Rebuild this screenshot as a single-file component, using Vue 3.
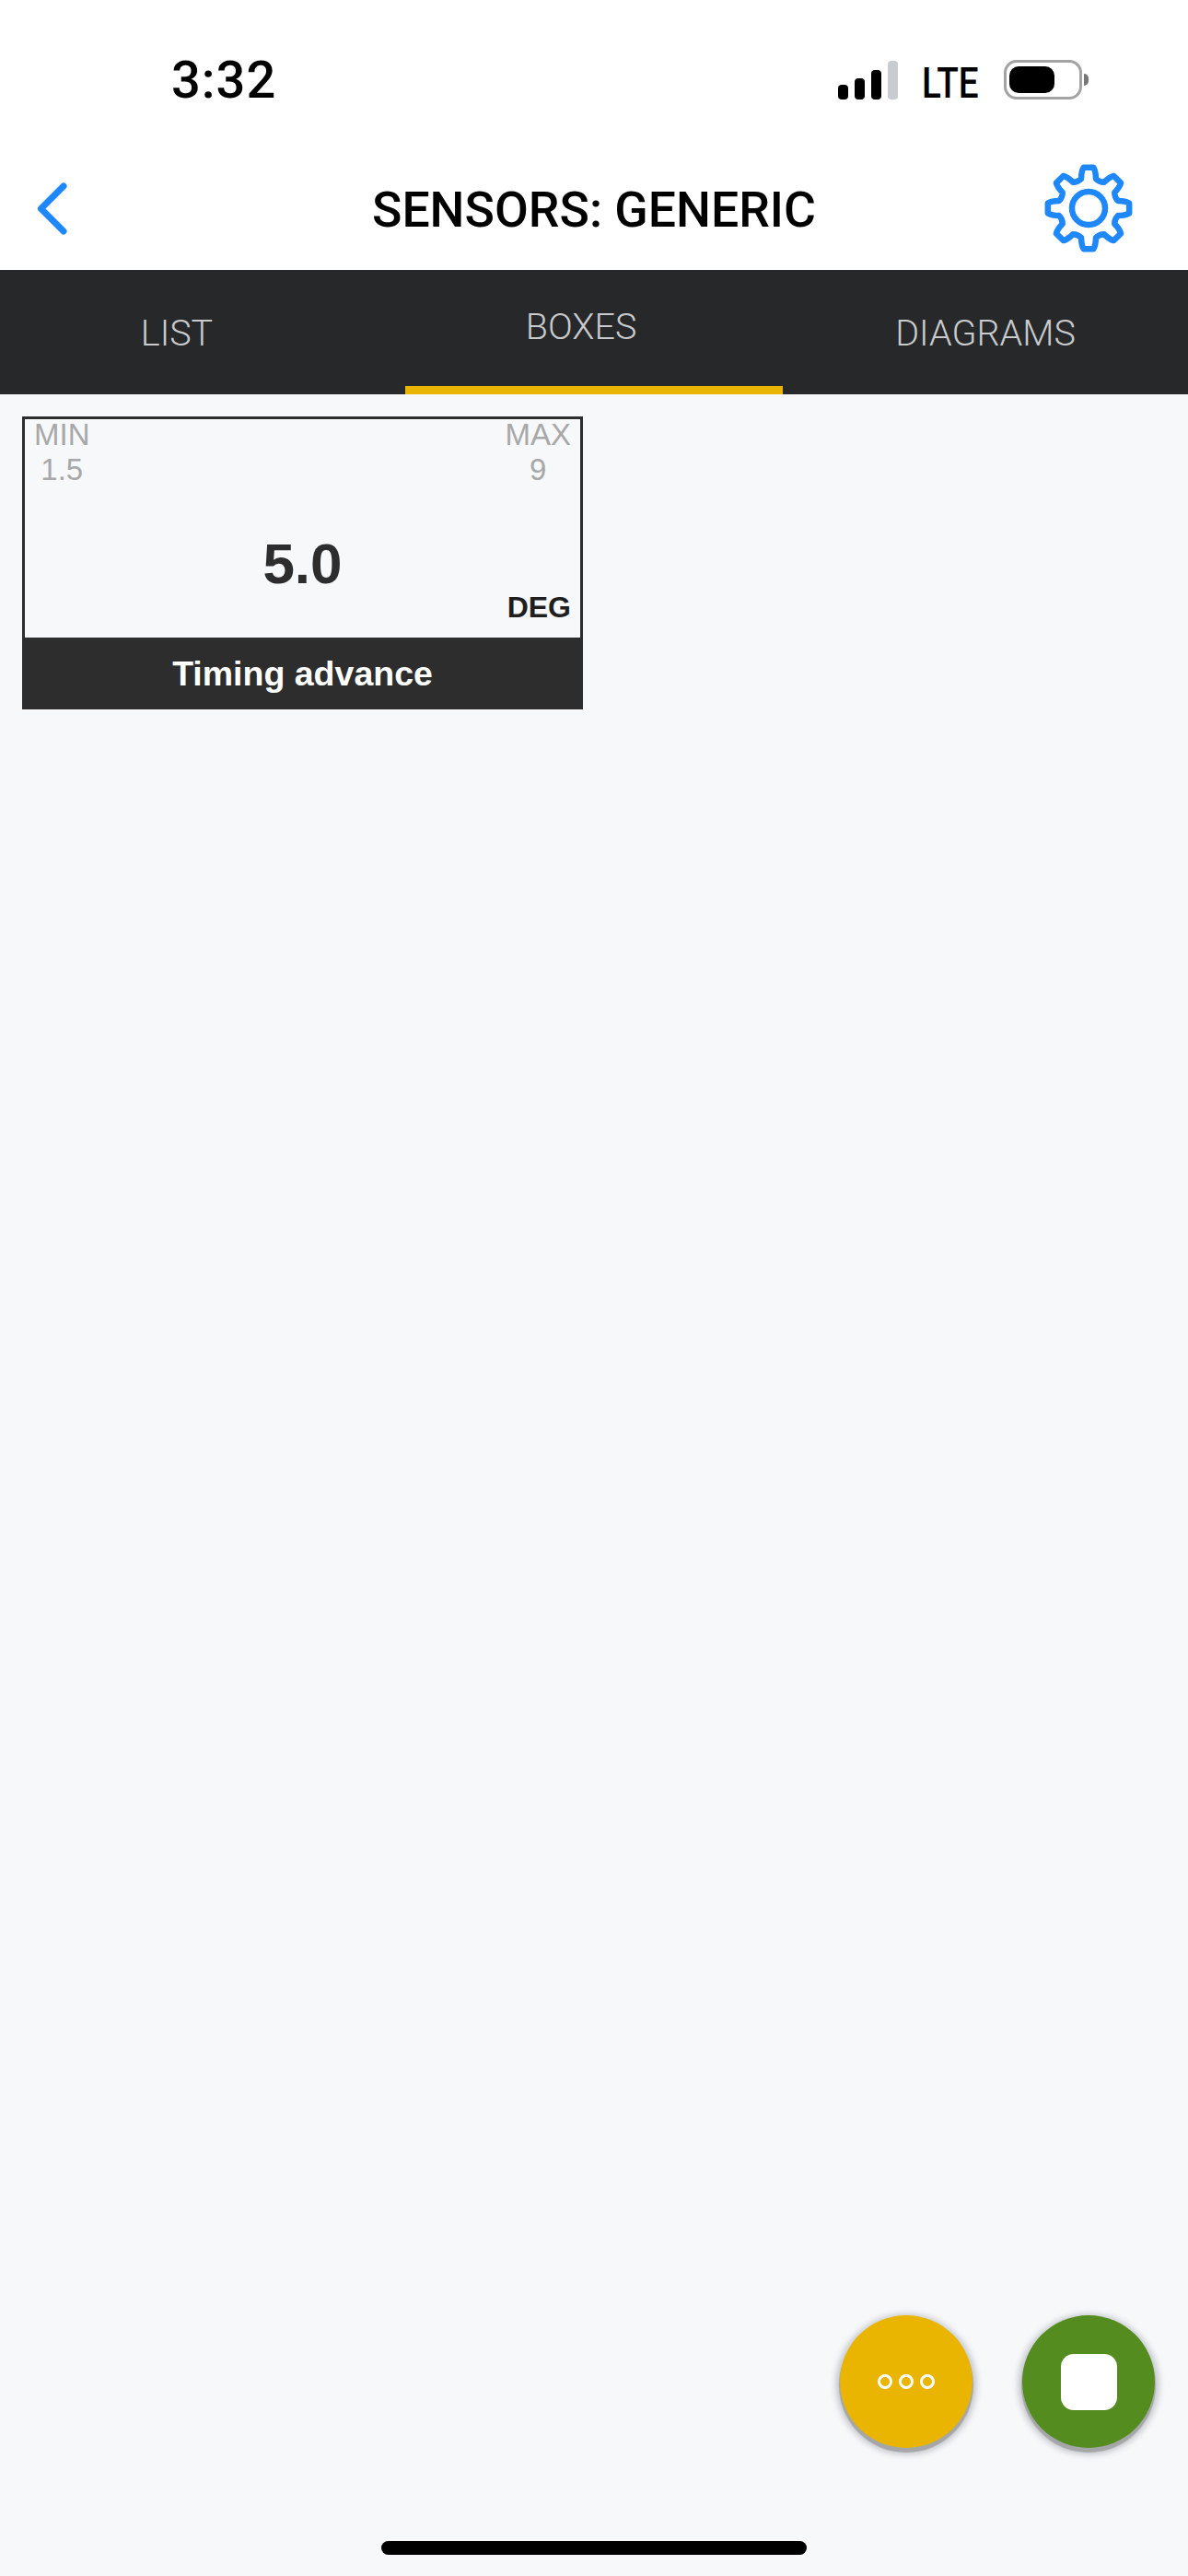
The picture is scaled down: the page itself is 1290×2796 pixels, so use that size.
<template>
  <div class="screen">
    <div class="status">
      <span class="time">3:32</span>
      <div class="signal">
        <i class="b1"></i><i class="b2"></i><i class="b3"></i><i class="b4"></i>
      </div>
      <span class="lte">LTE</span>
      <div class="battery"><div class="charge"></div></div>
      <div class="nub"></div>
    </div>

    <div class="navbar">
      <svg class="back" width="33" height="57" viewBox="0 0 33 57">
        <path d="M29 4 L4.5 28.5 L29 53" fill="none" stroke="#1e88fa" stroke-width="7" stroke-linecap="round" stroke-linejoin="round" />
      </svg>
      <h1>SENSORS: GENERIC</h1>
      <svg class="gear" width="96" height="96" viewBox="0 0 96 96">
        <path :d="gearPath" fill="none" stroke="#1e88fa" stroke-width="6.5" stroke-linejoin="round" />
        <circle cx="48" cy="48" r="18" fill="none" stroke="#1e88fa" stroke-width="6.5" />
      </svg>
    </div>

    <div class="tabs">
      <div class="tab list">LIST</div>
      <div class="tab boxes">BOXES</div>
      <div class="tab">DIAGRAMS</div>
    </div>

    <div class="content">
      <div class="card">
        <div class="card-body">
          <div class="range">
            <div class="minmax"><span>MIN</span><span>1.5</span></div>
            <div class="minmax"><span>MAX</span><span>9</span></div>
          </div>
          <div class="value">5.0</div>
          <div class="unit">DEG</div>
        </div>
        <div class="card-name">Timing advance</div>
      </div>
    </div>

    <div class="actions">
      <button class="fab more"><i></i><i></i><i></i></button>
      <button class="fab stop"><b></b></button>
    </div>

    <div class="home-row"><div class="home"></div></div>
  </div>
</template>

<script setup>
// 8 tooth outline for the settings icon
function pt(r, deg) {
  const a = (deg * Math.PI) / 180
  return (48 + r * Math.sin(a)).toFixed(2) + " " + (48 - r * Math.cos(a)).toFixed(2)
}

let gearPath = ""
for (let i = 0; i < 8; i++) {
  const c = i * 45
  gearPath += (i == 0 ? "M" : "L") + pt(33, c - 14)
  gearPath += " Q" + pt(41, c - 11) + " " + pt(44.5, c - 7)
  gearPath += " L" + pt(44.5, c + 7)
  gearPath += " Q" + pt(41, c + 11) + " " + pt(33, c + 14)
  gearPath += " Q" + pt(30.5, c + 22.5) + " " + pt(33, c + 31)
}
gearPath += " Z"
</script>

<style>
html, body {
  margin: 0;
  background: #f7f8fa;
}
</style>

<style scoped>
* {
  box-sizing: border-box;
}

.screen {
  width: 1290px;
  height: 2796px;
  display: flex;
  flex-direction: column;
  background: #f7f8fa;
  font-family: "Liberation Sans", Arial, sans-serif;
}

.status {
  height: 163px;
  background: #fff;
  display: flex;
  align-items: flex-start;
  padding-top: 65px;
}
.time {
  margin-left: 186px;
  width: 724px;
  font: 500 56px/44px Roboto, sans-serif;
  letter-spacing: 1px;
  color: #000;
}
.signal {
  width: 65px;
  height: 42px;
  margin-top: 1px;
  display: flex;
  align-items: flex-end;
  justify-content: space-between;
}
.signal i {
  width: 11px;
  border-radius: 4px;
  background: #000;
}
.b1 { height: 16px; }
.b2 { height: 23px; }
.b3 { height: 32px; }
.signal .b4 { height: 42px; background: #c8ccd0; }
.lte {
  margin: 4px 0 0 26px;
  width: 89px;
  font: 500 46px/42px Roboto, sans-serif;
  color: #000;
  transform: scaleX(0.84);
  transform-origin: left center;
}
.battery {
  width: 85px;
  height: 43px;
  border: 3px solid #a3a3a3;
  border-radius: 14px;
  padding: 4px 3px;
}
.charge {
  width: 49px;
  height: 29px;
  border-radius: 10px;
  background: #000;
}
.nub {
  width: 5px;
  height: 13px;
  margin: 15px 0 0 2px;
  background: #777;
  border-radius: 0 6px 6px 0;
}

.navbar {
  height: 130px;
  background: #fff;
  display: flex;
  align-items: center;
  padding: 0 60px 4px 40px;
}
.back {
  flex-shrink: 0;
}
.navbar h1 {
  flex: 1;
  margin: 4px 0 0 331px;
  font: 500 53.5px/56px Roboto, sans-serif;
  color: #000;
  white-space: nowrap;
}
.gear {
  flex-shrink: 0;
}

.tabs {
  height: 135px;
  background: #27282a;
  display: grid;
  grid-template-columns: 440px 410px 440px;
}
.tab {
  display: flex;
  align-items: center;
  justify-content: center;
  padding-top: 2px;
  font: 300 39.5px/44px Roboto, sans-serif;
  color: #c9cbcd;
}
.tab.list {
  padding-right: 56px;
}
.tab.boxes {
  padding: 0 28px 3px 0;
  border-bottom: 9px solid #e9b500;
}

.content {
  flex: 1;
  padding: 24px;
}
.card {
  width: 609px;
  height: 318px;
  display: flex;
  flex-direction: column;
}
.card-body {
  height: 240px;
  border: 3px solid #2d2d2d;
  border-bottom: 0;
  padding: 0 10px;
  display: flex;
  flex-direction: column;
}
.range {
  display: flex;
  justify-content: space-between;
}
.minmax {
  display: flex;
  flex-direction: column;
  align-items: center;
  font-size: 33px;
  line-height: 38px;
  margin-top: -2px;
  color: #a8a8a8;
}
.value {
  margin-top: 50px;
  text-align: center;
  font-size: 62px;
  line-height: 66px;
  font-weight: 700;
  color: #2d2d2d;
}
.unit {
  margin-top: -4px;
  text-align: right;
  font-size: 32px;
  line-height: 36px;
  font-weight: 700;
  color: #1f1f1f;
}
.card-name {
  height: 78px;
  background: #2d2d2d;
  color: #fff;
  display: flex;
  align-items: center;
  justify-content: center;
  font-size: 37.5px;
  font-weight: 700;
}

.actions {
  display: flex;
  justify-content: flex-end;
  gap: 54px;
  padding-right: 36px;
  margin-bottom: 101px;
}
.fab {
  width: 144px;
  height: 144px;
  padding: 0;
  border: 0;
  border-radius: 50%;
  display: flex;
  align-items: center;
  justify-content: center;
  box-shadow: 0 4px 1px 1px #a4a6a8, 0 3px 6px 5px #c9ccd0;
}
.more {
  background: #e9b500;
  gap: 7px;
}
.more i {
  width: 16px;
  height: 16px;
  border: 3px solid #fff;
  border-radius: 50%;
}
.stop {
  background: #558c20;
}
.stop b {
  display: block;
  width: 61px;
  height: 61px;
  background: #fff;
  border-radius: 14px;
}

.home-row {
  height: 38px;
  display: flex;
  justify-content: center;
}
.home {
  width: 462px;
  height: 15px;
  border-radius: 8px;
  background: #000;
}
</style>
